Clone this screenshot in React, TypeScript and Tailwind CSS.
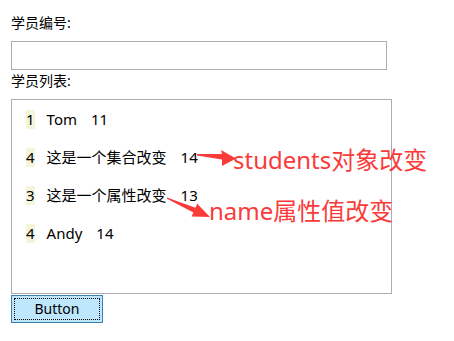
import React from 'react';

const students = [
  { id: 1, name: 'Tom', age: 11 },
  { id: 4, name: '这是一个集合改变', age: 14 },
  { id: 3, name: '这是一个属性改变', age: 13 },
  { id: 4, name: 'Andy', age: 14 },
];

function App() {
  return (
    <div className="relative min-h-screen w-[454px] h-[341px] bg-white text-black font-['Segoe_UI','Noto_Sans','Noto_Sans_CJK_SC',sans-serif] overflow-hidden">
      <div className="flex flex-col pl-[11px] pt-[13px]">
        <div className="text-[14px] leading-[20px]">学员编号:</div>
        <input
          type="text"
          className="mt-[8px] w-[376px] h-[29px] border border-[#abadb3] bg-white outline-none px-1 text-[14px]"
        />
        <div className="mt-[1px] text-[14px] leading-[20px]">学员列表:</div>
        <div className="mt-[8px] w-[381px] h-[195px] border border-[#abadb3] pt-[10px] pl-[14px] flex flex-col gap-[19px]">
          {students.map((s, i) => (
            <div key={i} className="flex items-center h-[19px] text-[15px] leading-[19px]">
              <span className="inline-block h-[19px] bg-[#f5f5dc]">{s.id}</span>
              <span className="ml-[12px]">{s.name}</span>
              <span className="ml-[14px]">{s.age}</span>
            </div>
          ))}
        </div>
        <button className="mt-[1px] w-[92px] h-[28px] border border-[#3c7fb1] bg-[#bee6fd] p-[2px]">
          <div className="w-full h-full border border-dotted border-black flex items-center justify-center text-[14px] leading-none">
            Button
          </div>
        </button>
      </div>

      {/* annotations */}
      <svg className="absolute inset-0 pointer-events-none" width="454" height="341">
        <polygon
          fill="#fb3a3a"
          points="197,154 222,154 221,150 236,158.5 222,166 222,159.5 197,155.5"
        />
        <polygon
          fill="#fb3a3a"
          points="167,197.5 195.4,207.8 197.2,203.7 210,217 191.6,216.5 193.4,212.4 167,198.8"
        />
      </svg>
      <div className="absolute left-[233px] top-[145px] text-[24px] leading-[30px] text-[#fb3a3a] font-['Segoe_UI','Noto_Sans','Noto_Sans_CJK_SC',sans-serif] whitespace-nowrap">
        students对象改变
      </div>
      <div className="absolute left-[209px] top-[196px] text-[24px] leading-[30px] text-[#fb3a3a] font-['Segoe_UI','Noto_Sans','Noto_Sans_CJK_SC',sans-serif] whitespace-nowrap">
        name属性值改变
      </div>
    </div>
  );
}

export default App;
